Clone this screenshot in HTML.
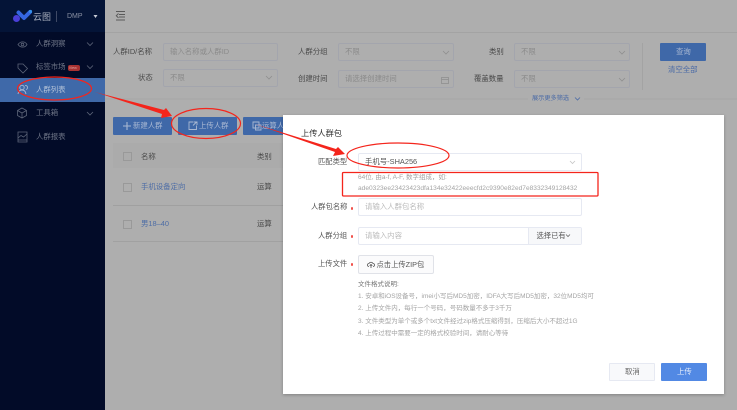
<!DOCTYPE html>
<html lang="zh-CN">
<head>
<meta charset="utf-8">
<style>
html,body{margin:0;padding:0;width:737px;height:410px;overflow:hidden;background:#aeaeae;font-family:"Liberation Sans","Noto Sans CJK SC",sans-serif;}
#w{position:absolute;left:0;top:0;width:737px;height:410px;filter:blur(.3px);}
.a{position:absolute;white-space:nowrap;line-height:12px;}
.box{position:absolute;box-sizing:border-box;}
.t{font-size:7.4px;color:#4a4a4a;}
.s{font-size:7.4px;color:#8b8b8b;}
.in{border:1px solid #a3a5ad;border-radius:2px;height:18px;background:#aeaeae;}
.side{font-size:7.4px;color:#6d7486;}
.bt{background:#3f68a8;border-radius:1px;height:17.500px;top:117px;}
.m{font-size:7.300px;color:#555;}
.n{font-size:6.500px;color:#a4a4a4;line-height:10px;}
.r{position:absolute;width:2.500px;height:2.500px;border-radius:50%;background:#f0504a;}
svg{position:absolute;left:0;top:0;}
</style>
</head>
<body>
<div id="w">
<!-- sidebar -->
<div class="box" style="left:0;top:0;width:105px;height:410px;background:#020b28;"></div>
<div class="box" style="left:0;top:0;width:105px;height:32px;background:#041437;"></div>
<div class="box" style="left:0;top:78px;width:105px;height:23.500px;background:#3f69a9;"></div>
<div class="a" style="left:33px;top:11px;font-size:9px;color:#a9afbd;">云图</div>
<div class="box" style="left:56px;top:11px;width:1px;height:11px;background:#3f4a66;"></div>
<div class="a" style="left:67px;top:10.500px;font-size:7px;color:#8a91a3;">DMP</div>
<div class="a side" style="left:36px;top:38px;">人群洞察</div>
<div class="a side" style="left:36px;top:61px;">标签市场</div>
<div class="box" style="left:68px;top:65px;width:12px;height:6px;border-radius:2px;background:#a83232;"></div>
<div class="a" style="left:69px;top:62px;font-size:4px;color:#d8a0a0;font-style:italic;">New</div>
<div class="a side" style="left:36px;top:84px;color:#b4c2d8;">人群列表</div>
<div class="a side" style="left:36px;top:107px;">工具箱</div>
<div class="a side" style="left:36px;top:131px;">人群报表</div>

<!-- top bar -->
<div class="box" style="left:105px;top:32px;width:632px;height:1px;background:#a3a3a3;"></div>

<!-- filters -->
<div class="a t" style="left:113px;top:46px;">人群ID/名称</div>
<div class="a t" style="left:138px;top:72px;">状态</div>
<div class="box in" style="left:163px;top:43px;width:115px;"></div>
<div class="box in" style="left:163px;top:69px;width:115px;"></div>
<div class="a s" style="left:170px;top:46px;">输入名称或人群ID</div>
<div class="a s" style="left:170px;top:72px;">不限</div>
<div class="a t" style="left:298px;top:46px;">人群分组</div>
<div class="a t" style="left:298px;top:73px;">创建时间</div>
<div class="box in" style="left:338px;top:43px;width:116px;"></div>
<div class="box in" style="left:338px;top:70px;width:116px;"></div>
<div class="a s" style="left:345px;top:46px;">不限</div>
<div class="a s" style="left:345px;top:73px;">请选择创建时间</div>
<div class="a t" style="left:489px;top:46px;">类别</div>
<div class="a t" style="left:474px;top:73px;">覆盖数量</div>
<div class="box in" style="left:514px;top:43px;width:116px;"></div>
<div class="box in" style="left:514px;top:70px;width:116px;"></div>
<div class="a s" style="left:521px;top:46px;">不限</div>
<div class="a s" style="left:521px;top:73px;">不限</div>
<div class="box" style="left:642px;top:43px;width:1px;height:47px;background:#a3a3a3;"></div>
<div class="box" style="left:660px;top:43px;width:46px;height:18px;background:#3f68a8;border-radius:1px;"></div>
<div class="a" style="left:676px;top:46px;font-size:7.4px;color:#a9b8d2;">查询</div>
<div class="a" style="left:668px;top:64px;font-size:7.4px;color:#4a6aa6;">清空全部</div>
<div class="a" style="left:532px;top:93px;font-size:6.200px;color:#4a6aa6;">展示更多筛选</div>

<!-- toolbar -->
<div class="box bt" style="left:113px;width:59px;"></div>
<div class="box bt" style="left:178px;width:59px;"></div>
<div class="box bt" style="left:243px;width:50px;"></div>
<div class="a" style="left:133px;top:120px;font-size:7.4px;color:#a9b8d2;">新建人群</div>
<div class="a" style="left:199px;top:120px;font-size:7.4px;color:#a9b8d2;">上传人群</div>
<div class="a" style="left:262px;top:120px;font-size:7.4px;color:#a9b8d2;">运算人群</div>

<!-- table -->
<div class="box" style="left:113px;top:143px;width:180px;height:99px;background:#ababab;border-bottom:1px solid #a1a1a1;"></div>
<div class="box" style="left:113px;top:168px;width:180px;height:38px;background:#aeaeae;border-bottom:1px solid #a0a0a0;"></div>
<div class="box" style="left:113px;top:206px;width:180px;height:35px;background:#aeaeae;"></div>
<div class="box" style="left:123px;top:152px;width:9px;height:9px;border:1px solid #999;"></div>
<div class="box" style="left:123px;top:183px;width:9px;height:9px;border:1px solid #999;"></div>
<div class="box" style="left:123px;top:220px;width:9px;height:9px;border:1px solid #999;"></div>
<div class="a t" style="left:141px;top:151px;">名称</div>
<div class="a t" style="left:257px;top:151px;">类别</div>
<div class="a" style="left:141px;top:181px;font-size:7.4px;color:#4f6ea6;">手机设备定向</div>
<div class="a" style="left:141px;top:218px;font-size:7.4px;color:#4f6ea6;">男18–40</div>
<div class="a t" style="left:257px;top:181px;">运算</div>
<div class="a t" style="left:257px;top:218px;">运算</div>

<!-- modal -->
<div class="box" style="left:283px;top:115px;width:441px;height:279px;background:#fff;box-shadow:0 1px 3px rgba(0,0,0,.25);"></div>
<div class="a" style="left:301px;top:128px;font-size:8.200px;color:#333;">上传人群包</div>
<div class="a m" style="left:318px;top:156px;">匹配类型</div>
<div class="box" style="left:358px;top:153px;width:224px;height:18px;border:1px solid #e6e9f2;border-radius:2px;"></div>
<div class="a" style="left:365px;top:156px;font-size:7.4px;color:#555;">手机号-SHA256</div>
<div class="a n" style="left:358px;top:173px;">64位, 由a-f, A-F, 数字组成，如:</div>
<div class="a n" style="left:358px;top:184px;font-size:6.600px;">ade0323ee23423423dfa134e32422eeecfd2c9390e82ed7e8332349128432</div>

<div class="a m" style="left:311px;top:201px;">人群包名称</div>
<div class="r" style="left:350.500px;top:207px;"></div>
<div class="box" style="left:358px;top:198px;width:224px;height:18px;border:1px solid #e6e9f2;border-radius:2px;"></div>
<div class="a" style="left:365px;top:201px;font-size:7.4px;color:#bbb;">请输入人群包名称</div>

<div class="a m" style="left:318px;top:229.500px;">人群分组</div>
<div class="r" style="left:350.500px;top:235px;"></div>
<div class="box" style="left:358px;top:226.500px;width:224px;height:18px;border:1px solid #e6e9f2;border-radius:2px;"></div>
<div class="box" style="left:528px;top:227.500px;width:53px;height:16px;background:#f7f8fa;border-left:1px solid #e6e9f2;"></div>
<div class="a" style="left:365px;top:229.500px;font-size:7.4px;color:#bbb;">请输入内容</div>
<div class="a m" style="left:536.500px;top:229.500px;">选择已有</div>

<div class="a m" style="left:318px;top:258px;">上传文件</div>
<div class="r" style="left:350.500px;top:263px;"></div>
<div class="box" style="left:358px;top:255px;width:76px;height:18.500px;border:1px solid #e0e2e8;border-radius:2px;background:#fbfbfc;"></div>
<div class="a m" style="left:376.500px;top:258.500px;">点击上传ZIP包</div>

<div class="a" style="left:358px;top:280px;font-size:6.500px;line-height:10px;color:#777;">文件格式说明:</div>
<div class="a n" style="left:358px;top:291.500px;">1. 安卓和iOS设备号，imei小写后MD5加密，IDFA大写后MD5加密，32位MD5均可</div>
<div class="a n" style="left:358px;top:304px;">2. 上传文件内，每行一个号码，号码数量不多于3千万</div>
<div class="a n" style="left:358px;top:316.500px;">3. 文件类型为单个或多个txt文件经过zip格式压缩得到，压缩后大小不超过1G</div>
<div class="a n" style="left:358px;top:329px;">4. 上传过程中需要一定的格式校验时间，请耐心等待</div>

<div class="box" style="left:609px;top:363px;width:46px;height:18px;background:#f8f9fb;border:1px solid #e6e9f2;border-radius:1px;"></div>
<div class="a" style="left:625px;top:366px;font-size:7.4px;color:#666;">取消</div>
<div class="box" style="left:661px;top:363px;width:46px;height:18px;background:#5289e4;border-radius:1px;"></div>
<div class="a" style="left:677px;top:366px;font-size:7.4px;color:#e6eefb;">上传</div>

<svg width="737" height="410" viewBox="0 0 737 410" fill="none">
  <!-- logo -->
  <path d="M18.500 12.500 L24 18 L30 12" stroke="#3566e0" stroke-width="4" stroke-linecap="round" stroke-linejoin="round"/>
  <circle cx="16.500" cy="18.500" r="3.500" fill="#4a3fd8"/>
  <circle cx="30.500" cy="11.500" r="1.600" fill="#3590e8"/>
  <path d="M93.500 15h4l-2 3z" fill="#c8ccd6"/>
  <!-- collapse icon -->
  <path d="M116 11.500h9M119 14.500h6M119 17h6M116 20h9M118.500 13.500l-2.200 2.200 2.200 2.200" stroke="#5a5a5a" stroke-width="1"/>
  <!-- sidebar icons -->
  <g stroke="#5c6478" stroke-width=".8">
    <path d="M18 44.500c2.500-3.500 7-3.500 9 0-2 3.500-6.500 3.500-9 0z"/><circle cx="22.500" cy="44.500" r="1.300"/>
    <path d="M18 64h5l4.500 4.500-4.500 4.500-5-5z"/>
    <path d="M22 108l4.500 2.500v5l-4.500 2.500-4.500-2.500v-5z M17.500 110.500l4.500 2.500 4.500-2.500 M22 113v5"/>
    <path d="M18 132h9v10h-9z M18 138l3-2.500 2.500 1.500 3.500-3 M18 140h9"/>
    <path d="M87 42.500l3 3 3-3M87 65.500l3 3 3-3M87 112l3 3 3-3"/>
  </g>
  <g stroke="#a9b9d3" stroke-width=".9"><circle cx="22" cy="87.500" r="2.200"/><path d="M18 94c.5-3 2-4 4-4s3.500 1 4 4M25 85.500a2 2 0 0 1 1 4"/></g>
  <!-- select chevrons -->
  <g stroke="#8f8f8f" stroke-width=".8">
    <path d="M266 76l3 3 3-3M443 51l3 3 3-3M619 51l3 3 3-3M619 78l3 3 3-3"/>
    <rect x="441.500" y="77.500" width="7" height="6"/><path d="M441.500 79.500h7"/>
    <path d="M570 161l2.500 2.500 2.500-2.500" stroke="#c5c5c5"/>
  </g>
  <path d="M575 97.500l2.500 2.500 2.500-2.500" stroke="#4a6aa6" stroke-width=".8"/>
  <path d="M105 99h423M584 99h153" stroke="#a6a6a6" stroke-width="1"/>
  <!-- toolbar icons -->
  <path d="M127 122v8M123 126h8" stroke="#a9b8d2" stroke-width="1.100"/>
  <path d="M193.500 122h-4.500v7.500h7.500v-4M193 125.500l3.500-3.500M194 122h3v3" stroke="#a9b8d2" stroke-width=".9"/>
  <path d="M253 122h6v6h-6zM255.500 125h5.500v5h-5.500z" stroke="#a9b8d2" stroke-width=".9"/>
  <!-- modal icons -->
  <path d="M566 234.500l2 2 2-2" stroke="#666" stroke-width=".8"/>
  <path d="M369 266.500a1.500 1.500 0 0 1 0-3 2.200 2.200 0 0 1 4 0 1.500 1.500 0 0 1 0 3M371 268v-3.500M369.700 265.700l1.300-1.300 1.300 1.300" stroke="#555" stroke-width=".8"/>
</svg>
</div>
<!-- red annotations -->
<svg width="737" height="410" viewBox="0 0 737 410" fill="none">
  <g stroke="#f4251c" fill="none">
    <ellipse cx="54.500" cy="88.500" rx="37" ry="11.500" stroke-width="1.200"/>
    <ellipse cx="206" cy="123.500" rx="34.500" ry="15" stroke-width="1.200"/>
    <ellipse cx="398" cy="155.500" rx="51" ry="12.500" stroke-width="1.200"/>
    <rect x="342.500" y="172.500" width="255.500" height="23.500" rx="1" stroke-width="1.300"/>
  </g>
  <path d="M95 92 L164 110 L166 108 L172 116 L161 118 L162 114 Z" fill="#f4251c"/>
  <path d="M255 124 L336 149 L338 147 L345 154 L333 156 L335 152 Z" fill="#f4251c"/>
</svg>
</body>
</html>
